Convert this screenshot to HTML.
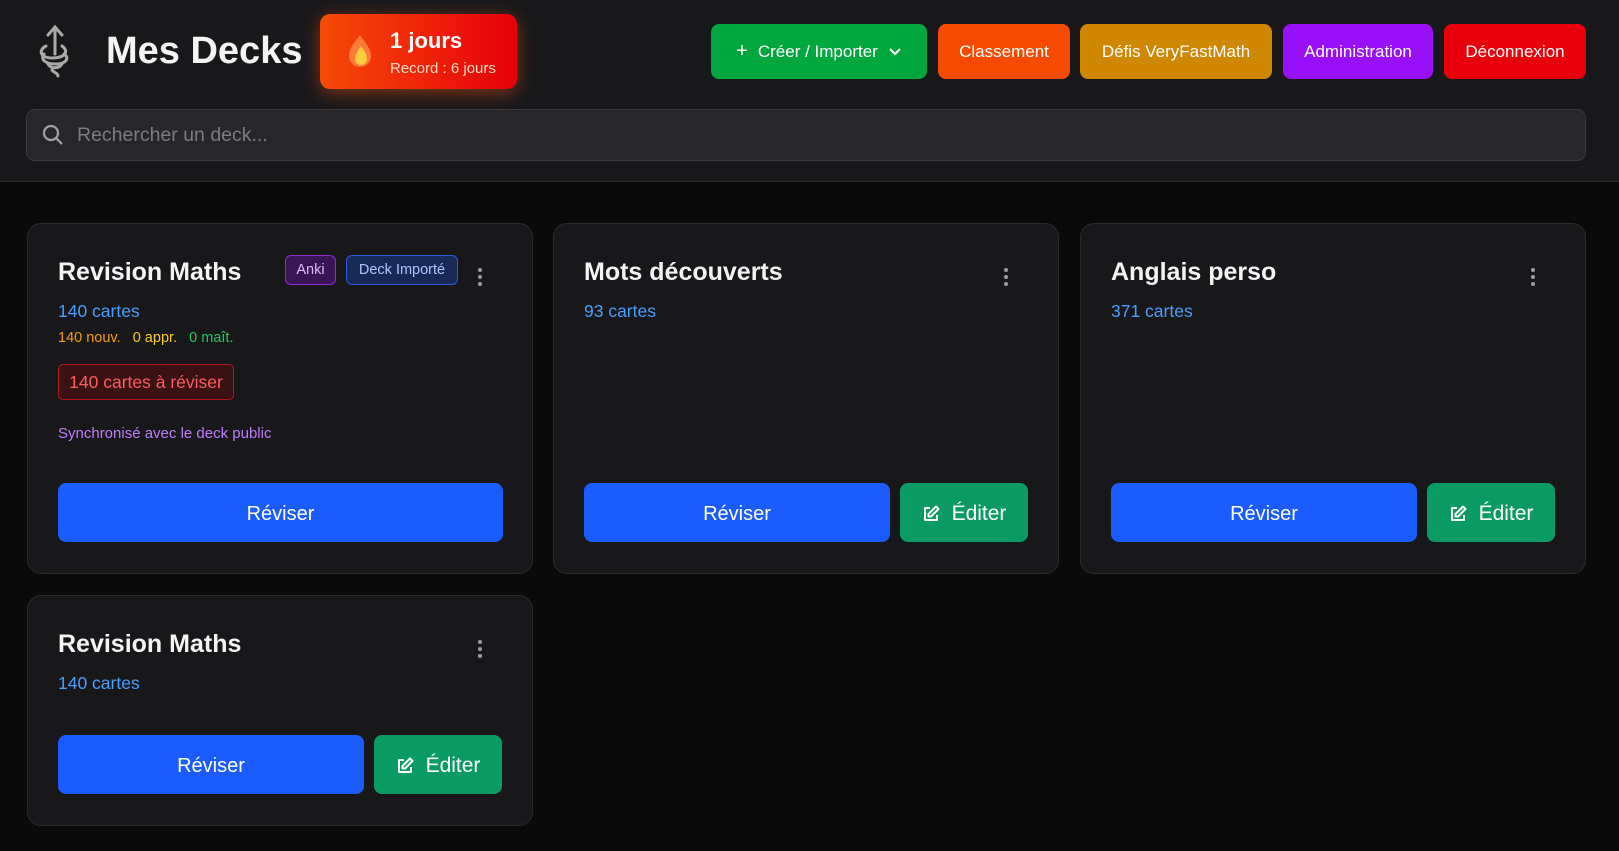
<!DOCTYPE html>
<html><head><meta charset="utf-8"><style>
*{box-sizing:border-box;margin:0;padding:0}
body{width:1619px;height:851px;background:#0a0a0a;font-family:"Liberation Sans",sans-serif;color:#fff;position:relative;overflow:hidden}
.hdr{position:absolute;left:0;top:0;width:1619px;height:182px;background:#18181b;border-bottom:1px solid #2c2c30}
.abs{position:absolute}
.btn{position:absolute;top:24px;height:55px;border-radius:8px;display:flex;align-items:center;justify-content:center;font-size:17px;color:#fff}
.search{position:absolute;left:26px;top:109px;width:1560px;height:52px;background:#27272a;border:1px solid #3a3a3e;border-radius:9px}
.card{position:absolute;width:506px;background:#18181b;border:1px solid #2a2a2e;border-radius:14px}
.title{position:absolute;left:30px;font-size:25px;font-weight:bold;color:#f4f4f5}
.cnt{position:absolute;left:30px;font-size:17.5px;color:#4a9eff}
.dots{position:absolute;width:4px}
.dots i{display:block;width:4px;height:4px;border-radius:2px;background:#9a9aa0;margin-bottom:3px}
.rev{position:absolute;height:59px;background:#1a5cff;border-radius:8px;display:flex;align-items:center;justify-content:center;font-size:20px;padding-top:3px}
.edit{position:absolute;height:59px;width:128px;background:#0a9a63;border-radius:8px;display:flex;align-items:center;justify-content:center;font-size:21px;gap:12px;padding-top:2px}
</style></head><body>
<div class="hdr">
<svg class="abs" style="left:34px;top:24px" width="42" height="54" viewBox="0 0 42 54" fill="none" stroke="#aaa" stroke-width="3" stroke-linecap="round">
<path d="M21 4v26M14 11l7-8 7 8"/><path d="M12 22c-8 4-6 12 6 12s18-6 10-12"/><path d="M10 30c-4 6 2 10 12 10s14-6 8-10"/><path d="M14 40c2 4 10 6 14 0"/><path d="M18 46c2 3 6 3 6 6"/></svg>
<div class="abs" style="left:106px;top:30px;font-size:38px;font-weight:bold;color:#f4f4f5">Mes Decks</div>
<div class="abs" style="left:320px;top:14px;width:197px;height:75px;border-radius:10px;background:linear-gradient(90deg,#f74a08,#e60009);box-shadow:0 4px 18px rgba(255,90,20,.45)">
<svg class="abs" style="left:28px;top:20px" width="24" height="34" viewBox="0 0 24 34"><path d="M12 1C6 9 1 14 1 22a11 11 0 0 0 22 0C23 14 17 9 12 1z" fill="#ff7b3a"/><path d="M13 12c-3 5-6 8-6 13a6 6 0 0 0 12 0c0-5-3-8-6-13z" fill="#ffcc40"/></svg>
<div class="abs" style="left:70px;top:14px;font-size:22px;font-weight:bold">1 jours</div>
<div class="abs" style="left:70px;top:46px;font-size:15px;color:#ffd9c0">Record : 6 jours</div>
</div>
<div class="btn" style="left:711px;width:216px;background:#00a63e;gap:10px"><span style="font-size:20px">+</span> Créer / Importer <svg width="14" height="10" viewBox="0 0 14 10"><path d="M2 2l5 5 5-5" stroke="#fff" stroke-width="2" fill="none"/></svg></div>
<div class="btn" style="left:938px;width:132px;background:#f54a00">Classement</div>
<div class="btn" style="left:1080px;width:192px;background:#d08700">Défis VeryFastMath</div>
<div class="btn" style="left:1283px;width:150px;background:#9810fa">Administration</div>
<div class="btn" style="left:1444px;width:142px;background:#e7000b">Déconnexion</div>
<div class="search">
<svg class="abs" style="left:15px;top:14px" width="22" height="22" viewBox="0 0 22 22" fill="none" stroke="#a1a1aa" stroke-width="2.2"><circle cx="9" cy="9" r="7"/><path d="M14 14l6 6"/></svg>
<div class="abs" style="left:50px;top:14px;font-size:19.5px;color:#7b7b82">Rechercher un deck...</div>
</div>
</div>

<div class="card" style="left:27px;top:223px;height:351px">
<div class="title" style="top:34px">Revision Maths</div>
<div class="abs" style="left:257px;top:31px;width:51px;height:30px;border:1px solid #8e2bd0;background:#3b1456;border-radius:6px;color:#e0b8ff;font-size:14.5px;display:flex;align-items:center;justify-content:center">Anki</div>
<div class="abs" style="left:318px;top:31px;width:112px;height:30px;border:1px solid #2a5ad8;background:#172a55;border-radius:6px;color:#a9c6ff;font-size:14.5px;display:flex;align-items:center;justify-content:center">Deck Importé</div>
<div class="dots" style="left:450px;top:44px"><i></i><i></i><i></i></div>
<div class="cnt" style="top:77px">140 cartes</div>
<div class="abs" style="left:30px;top:106px;font-size:14.5px"><span style="color:#f59e0b">140 nouv.</span>&nbsp;&nbsp; <span style="color:#facc15">0 appr.</span>&nbsp;&nbsp; <span style="color:#22c55e">0 maît.</span></div>
<div class="abs" style="left:30px;top:140px;width:176px;height:36px;border:1px solid #b5161c;background:#3a1214;border-radius:5px;color:#ff5c5c;font-size:17.5px;display:flex;align-items:center;justify-content:center">140 cartes à réviser</div>
<div class="abs" style="left:30px;top:201px;font-size:15px;color:#c07cff">Synchronisé avec le deck public</div>
<div class="rev" style="left:30px;top:259px;width:445px">Réviser</div>
</div>

<div class="card" style="left:553px;top:223px;height:351px">
<div class="title" style="top:34px">Mots découverts</div>
<div class="dots" style="left:450px;top:44px"><i></i><i></i><i></i></div>
<div class="cnt" style="top:77px">93 cartes</div>
<div class="rev" style="left:30px;top:259px;width:306px">Réviser</div>
<div class="edit" style="left:346px;top:259px"><svg width="18" height="18" viewBox="0 0 18 18" fill="none" stroke="#fff" stroke-width="2" stroke-linejoin="round"><path d="M8 3H3v12h12v-5"/><path d="M14 1.5l2.5 2.5L9 11.5H6.5V9z"/></svg>Éditer</div>
</div>

<div class="card" style="left:1080px;top:223px;height:351px">
<div class="title" style="top:34px">Anglais perso</div>
<div class="dots" style="left:450px;top:44px"><i></i><i></i><i></i></div>
<div class="cnt" style="top:77px">371 cartes</div>
<div class="rev" style="left:30px;top:259px;width:306px">Réviser</div>
<div class="edit" style="left:346px;top:259px"><svg width="18" height="18" viewBox="0 0 18 18" fill="none" stroke="#fff" stroke-width="2" stroke-linejoin="round"><path d="M8 3H3v12h12v-5"/><path d="M14 1.5l2.5 2.5L9 11.5H6.5V9z"/></svg>Éditer</div>
</div>

<div class="card" style="left:27px;top:595px;height:231px">
<div class="title" style="top:34px">Revision Maths</div>
<div class="dots" style="left:450px;top:44px"><i></i><i></i><i></i></div>
<div class="cnt" style="top:77px">140 cartes</div>
<div class="rev" style="left:30px;top:139px;width:306px">Réviser</div>
<div class="edit" style="left:346px;top:139px"><svg width="18" height="18" viewBox="0 0 18 18" fill="none" stroke="#fff" stroke-width="2" stroke-linejoin="round"><path d="M8 3H3v12h12v-5"/><path d="M14 1.5l2.5 2.5L9 11.5H6.5V9z"/></svg>Éditer</div>
</div>
</body></html>
